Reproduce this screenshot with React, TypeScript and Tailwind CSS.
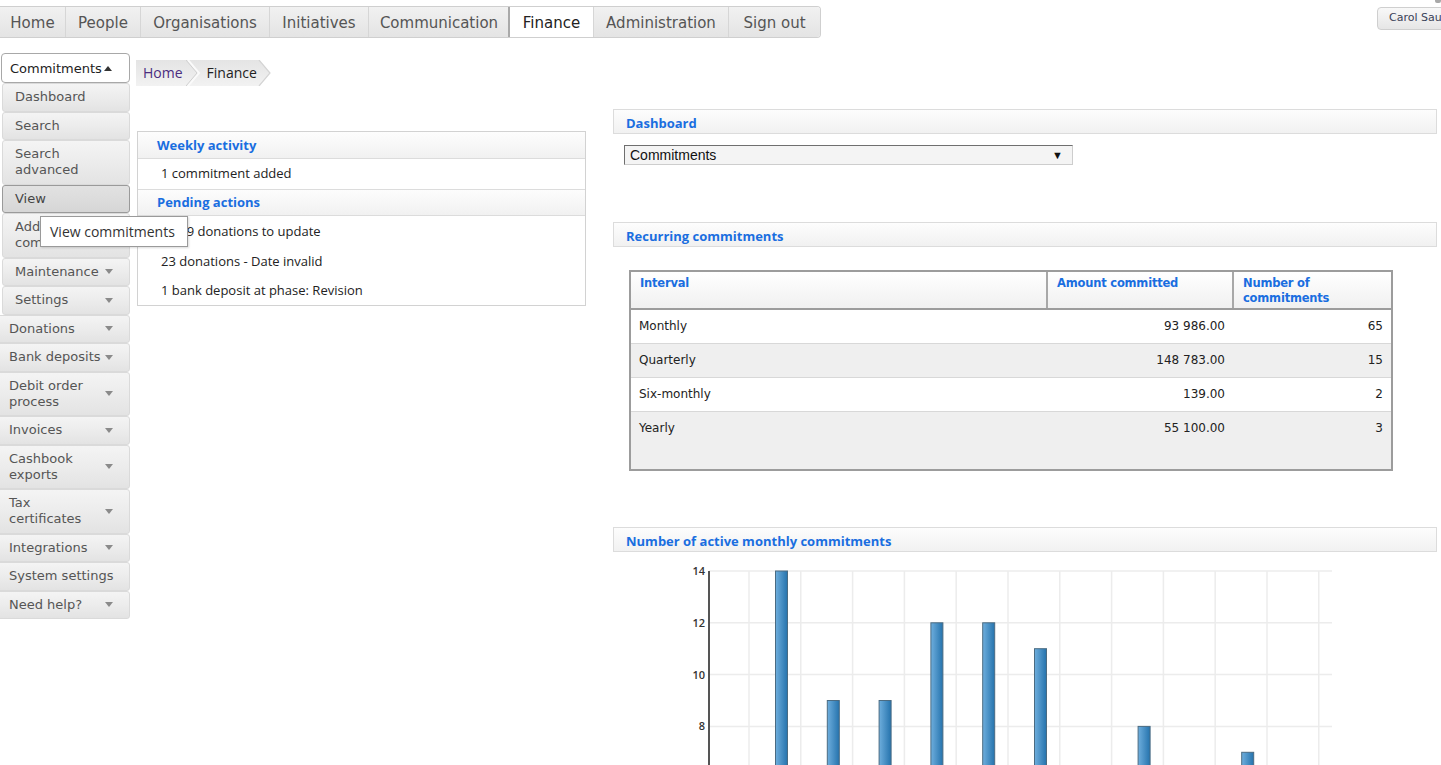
import React from "react";

const VER = "font-['DejaVu_Sans',Verdana,sans-serif]";
const SEG = "font-['Open_Sans','Noto_Sans',sans-serif]";
const ARI = "font-['Liberation_Sans',Arial,sans-serif]";

const navItems: { label: string; w: number; active?: boolean }[] = [
  { label: "Home", w: 65 },
  { label: "People", w: 75 },
  { label: "Organisations", w: 129 },
  { label: "Initiatives", w: 99 },
  { label: "Communication", w: 141 },
  { label: "Finance", w: 84, active: true },
  { label: "Administration", w: 135 },
  { label: "Sign out", w: 92 },
];

function DownArrow() {
  return (
    <span className="inline-block w-0 h-0 shrink-0 border-x-[4px] border-x-transparent border-t-[5px] border-t-[#8a8a8a]" />
  );
}

function SideItem({
  label,
  arrow,
  sub,
  active,
}: {
  label: React.ReactNode;
  arrow?: boolean;
  sub?: boolean;
  active?: boolean;
}) {
  return (
    <div
      className={
        "flex items-center justify-between rounded-[3px] border py-[5.25px] leading-[16px] text-[13px] " +
        (arrow ? "pr-[16px] " : "pr-[2px] ") +
        (sub ? "ml-[2px] w-[128px] pl-[12px] " : "ml-[-4px] w-[134px] pl-[12px] ") +
        (active
          ? "border-[#9a9a9a] bg-linear-to-b from-[#e2e2e2] to-[#d6d6d6] text-[#444]"
          : "border-[#dadada] bg-linear-to-b from-[#f4f4f4] via-[#ececec] to-[#e3e3e3] text-[#555]")
      }
    >
      <span className="whitespace-nowrap">{label}</span>
      {arrow && <DownArrow />}
    </div>
  );
}

function Header({ children, pl = "pl-[12px] pt-[4px] h-[25px]" }: { children: React.ReactNode; pl?: string }) {
  return (
    <div
      className={
        "flex items-center border border-[#dcdcdc] bg-linear-to-b from-[#fdfdfd] to-[#f1f1f1] text-[13px] font-bold text-[#1a6ee0] " +
        SEG +
        " " +
        pl
      }
    >
      {children}
    </div>
  );
}

function Chart() {
  const X0 = 613;
  const Y0 = 555;
  const yv = (v: number) => 570 + (14 - v) * 25.9 - Y0;
  const xs = Array.from({ length: 12 }, (_, k) => 749 + k * 51.8 - X0);
  const bars = [
    { i: 0, v: 14 },
    { i: 1, v: 9 },
    { i: 2, v: 9 },
    { i: 3, v: 12 },
    { i: 4, v: 12 },
    { i: 5, v: 11 },
    { i: 7, v: 8 },
    { i: 9, v: 7 },
  ];
  return (
    <svg width={824} height={240} className="block">
      <defs>
        <linearGradient id="barg" x1="0" x2="1" y1="0" y2="0">
          <stop offset="0" stopColor="#6eaedd" />
          <stop offset="1" stopColor="#2573ad" />
        </linearGradient>
      </defs>
      {[14, 12, 10, 8, 6].map((v) => (
        <line key={v} x1={709 - X0} x2={1332 - X0} y1={yv(v)} y2={yv(v)} stroke="#ececec" strokeWidth={1.5} />
      ))}
      {xs.map((x, k) => (
        <line key={k} x1={x} x2={x} y1={yv(14)} y2={240} stroke="#ececec" strokeWidth={1.5} />
      ))}
      {bars.map((b) => (
        <rect
          key={b.i}
          x={775 + b.i * 51.8 - X0 + 0.5}
          y={yv(b.v)}
          width={12}
          height={240}
          fill="url(#barg)"
          stroke="#4a6b82"
          strokeWidth={1}
        />
      ))}
      <line x1={709 - X0} x2={709 - X0} y1={yv(14)} y2={240} stroke="#555" strokeWidth={2} />
      {[14, 12, 10, 8].map((v) => (
        <text
          key={v}
          x={705 - X0}
          y={yv(v) + 4}
          textAnchor="end"
          fontSize={11}
          fontWeight={600}
          fill="#333"
          fontFamily="'Open Sans','Noto Sans',sans-serif"
        >
          {v}
        </text>
      ))}
    </svg>
  );
}

export default function App() {
  const rows = [
    { k: "Monthly", a: "93 986.00", n: "65" },
    { k: "Quarterly", a: "148 783.00", n: "15" },
    { k: "Six-monthly", a: "139.00", n: "2" },
    { k: "Yearly", a: "55 100.00", n: "3" },
  ];
  return (
    <div className="relative h-[765px] w-[1441px] overflow-hidden bg-white">
      {/* top bar */}
      <div className="flex h-[53px] items-start pt-[6px]">
        <div className={"flex h-[32px] overflow-hidden rounded-r-[4px] border border-l-0 border-[#cfcfcf] text-[15px] " + VER}>
          {navItems.map((n, idx) => (
            <div
              key={n.label}
              style={{ width: n.w }}
              className={
                "flex items-center justify-center pt-[2px] " +
                (idx > 0 ? "border-l " : "") +
                (n.active
                  ? "border-[#a9a9a9] bg-white text-[#222] outline outline-[#a9a9a9]"
                  : "border-[#d6d6d6] bg-linear-to-b from-[#f1f1f1] to-[#e4e4e4] text-[#555]")
              }
            >
              {n.label}
            </div>
          ))}
        </div>
        <div className="flex-1" />
        <div
          className={
            "mt-[1px] mr-[-40px] flex h-[23px] w-[104px] shrink-0 items-center whitespace-nowrap rounded-[4px] border border-[#cfcfcf] bg-linear-to-b from-[#f8f8f8] to-[#e6e6e6] pl-[11px] text-[11px] text-[#3a4258] " +
            VER
          }
        >
          Carol Saunders
        </div>
      </div>

      {/* main */}
      <div className="flex items-start">
        {/* sidebar */}
        <div className={"flex w-[130px] shrink-0 flex-col " + VER}>
          <div className="ml-[1px] flex h-[30px] w-[129px] items-center justify-between rounded-[4px] border border-[#a8a8a8] bg-white pl-[8px] pr-[17px] pt-[1px] text-[13px] text-[#222]">
            <span>Commitments</span>
            <span className="inline-block h-0 w-0 border-x-[4px] border-b-[5px] border-x-transparent border-b-[#333]" />
          </div>
          <SideItem sub label="Dashboard" />
          <SideItem sub label="Search" />
          <SideItem sub label={<>Search<br />advanced</>} />
          <SideItem sub active label="View" />
          <SideItem sub label={<>Add<br />commitment</>} />
          <SideItem sub arrow label="Maintenance" />
          <SideItem sub arrow label="Settings" />
          <SideItem arrow label="Donations" />
          <SideItem arrow label="Bank deposits" />
          <SideItem arrow label={<>Debit order<br />process</>} />
          <SideItem arrow label="Invoices" />
          <SideItem arrow label={<>Cashbook<br />exports</>} />
          <SideItem arrow label={<>Tax<br />certificates</>} />
          <SideItem arrow label="Integrations" />
          <SideItem label="System settings" />
          <SideItem arrow label="Need help?" />
        </div>

        {/* content */}
        <div className="ml-[6px] flex flex-col">
          {/* breadcrumb */}
          <div className={"mt-[7px] flex h-[26px] items-stretch text-[14px] " + SEG}>
            <div className="flex items-center bg-linear-to-b from-[#e4e4e4] to-[#f2f2f2] pb-[1px] pl-[7px] pr-[3px] text-[#4b2d7f]">Home</div>
            <svg width="18" height="26" className="block">
              <defs>
                <linearGradient id="bcg" x1="0" x2="0" y1="0" y2="1">
                  <stop offset="0" stopColor="#e4e4e4" />
                  <stop offset="1" stopColor="#f2f2f2" />
                </linearGradient>
              </defs>
              <rect x="0" y="0" width="18" height="26" fill="url(#bcg)" />
              <polyline points="2,0 13,13 2,26" fill="none" stroke="#fafafa" strokeWidth="2" />
              <polyline points="0,0 11,13 0,26" fill="none" stroke="#d0d0d0" strokeWidth="1" />
            </svg>
            <div className="flex items-center bg-linear-to-b from-[#e4e4e4] to-[#f2f2f2] pb-[1px] pl-[3px] pr-[1px] text-[#222]">Finance</div>
            <svg width="13" height="26" className="block">
              <defs>
                <linearGradient id="bcg2" x1="0" x2="0" y1="0" y2="1">
                  <stop offset="0" stopColor="#e4e4e4" />
                  <stop offset="1" stopColor="#f2f2f2" />
                </linearGradient>
              </defs>
              <polygon points="0,0 1,0 12,13 1,26 0,26" fill="url(#bcg2)" />
              <polyline points="1,0 12,13 1,26" fill="none" stroke="#d4d4d4" strokeWidth="1.2" />
            </svg>
          </div>

          <div className="flex items-start">
            {/* left column */}
            <div className={"ml-[1px] mt-[45px] w-[449px] border border-[#d2d2d2] text-[13px] text-[#222] " + SEG}>
              <Header pl="pl-[19px] pt-[1px] border-x-0 border-t-0 h-[27px]">Weekly activity</Header>
              <div className="flex h-[30px] items-center pl-[23px]">1 commitment added</div>
              <Header pl="pl-[19px] pt-[1px] border-x-0 h-[27px]">Pending actions</Header>
              <div className="flex h-[31px] items-center pl-[23px]">1 119 donations to update</div>
              <div className="flex h-[29px] items-center pl-[23px]">23 donations - Date invalid</div>
              <div className="flex h-[29px] items-center pl-[23px]">1 bank deposit at phase: Revision</div>
            </div>

            {/* right column */}
            <div className="ml-[27px] mt-[23px] flex w-[824px] flex-col">
              <Header>Dashboard</Header>
              <div
                className={
                  "ml-[11px] mt-[11px] flex h-[20px] w-[449px] items-center justify-between border border-[#cdcdcd] border-l-[#6f6f6f] border-t-[#6f6f6f] bg-[#f4f4f4] pl-[5px] pr-[9px] text-[14px] text-[#111] " +
                  ARI
                }
              >
                <span>Commitments</span>
                <span className="text-[11px]">▼</span>
              </div>
              <div className="mt-[57px]">
                <Header>Recurring commitments</Header>
              </div>
              <div className="ml-[16px] mt-[23px] h-[201px] w-[764px] border-2 border-[#9c9c9c] bg-[#efefef]">
                <table className={"w-full table-fixed border-collapse text-[12px] " + VER}>
                  <colgroup>
                    <col style={{ width: 416 }} />
                    <col style={{ width: 186 }} />
                    <col style={{ width: 158 }} />
                  </colgroup>
                  <thead>
                    <tr className="h-[37px] bg-linear-to-b from-white to-[#f0f0f0]">
                      <th className="border-b-2 border-[#9c9c9c] pl-[9px] pt-[4px] text-left align-top text-[11.5px] font-bold leading-[15px] tracking-[-0.2px] text-[#1a6ee0]">Interval</th>
                      <th className="border-b-2 border-l-2 border-[#a8a8a8] border-b-[#9c9c9c] pl-[9px] pt-[4px] text-left align-top text-[11.5px] font-bold leading-[15px] tracking-[-0.2px] text-[#1a6ee0]">Amount committed</th>
                      <th className="border-b-2 border-l-2 border-[#a8a8a8] border-b-[#9c9c9c] pl-[9px] pt-[4px] text-left align-top text-[11.5px] font-bold leading-[15px] tracking-[-0.2px] text-[#1a6ee0]">Number of<br />commitments</th>
                    </tr>
                  </thead>
                  <tbody>
                    {rows.map((r, i) => (
                      <tr
                        key={r.k}
                        className={
                          (i % 2 === 0 ? "bg-white " : "bg-[#efefef] ") +
                          (i < 3 ? "h-[34px] border-b border-[#d8d8d8] " : "h-[34px] ") +
                          "text-[#222]"
                        }
                      >
                        <td className="pl-[8px]">{r.k}</td>
                        <td className="pr-[8px] text-right">{r.a}</td>
                        <td className="pr-[8px] text-right">{r.n}</td>
                      </tr>
                    ))}
                  </tbody>
                </table>
              </div>
              <div className="mt-[56px]">
                <Header>Number of active monthly commitments</Header>
              </div>
              <div className="mt-[4px]">
                <Chart />
              </div>
            </div>
          </div>
        </div>
      </div>

      {/* tooltip */}
      <div
        className={
          "absolute left-[40px] top-[216px] flex h-[31px] w-[148px] items-center border border-[#9a9a9a] bg-white pl-[9px] text-[14px] text-[#333] shadow-[1px_1px_2px_rgba(0,0,0,0.15)] " +
          SEG
        }
      >
        View commitments
      </div>
      {/* small corner mark */}
      <div className="absolute right-0 top-0 h-[3px] w-[6px] rounded-b-[2px] bg-[#a8a8a8]" />
    </div>
  );
}
